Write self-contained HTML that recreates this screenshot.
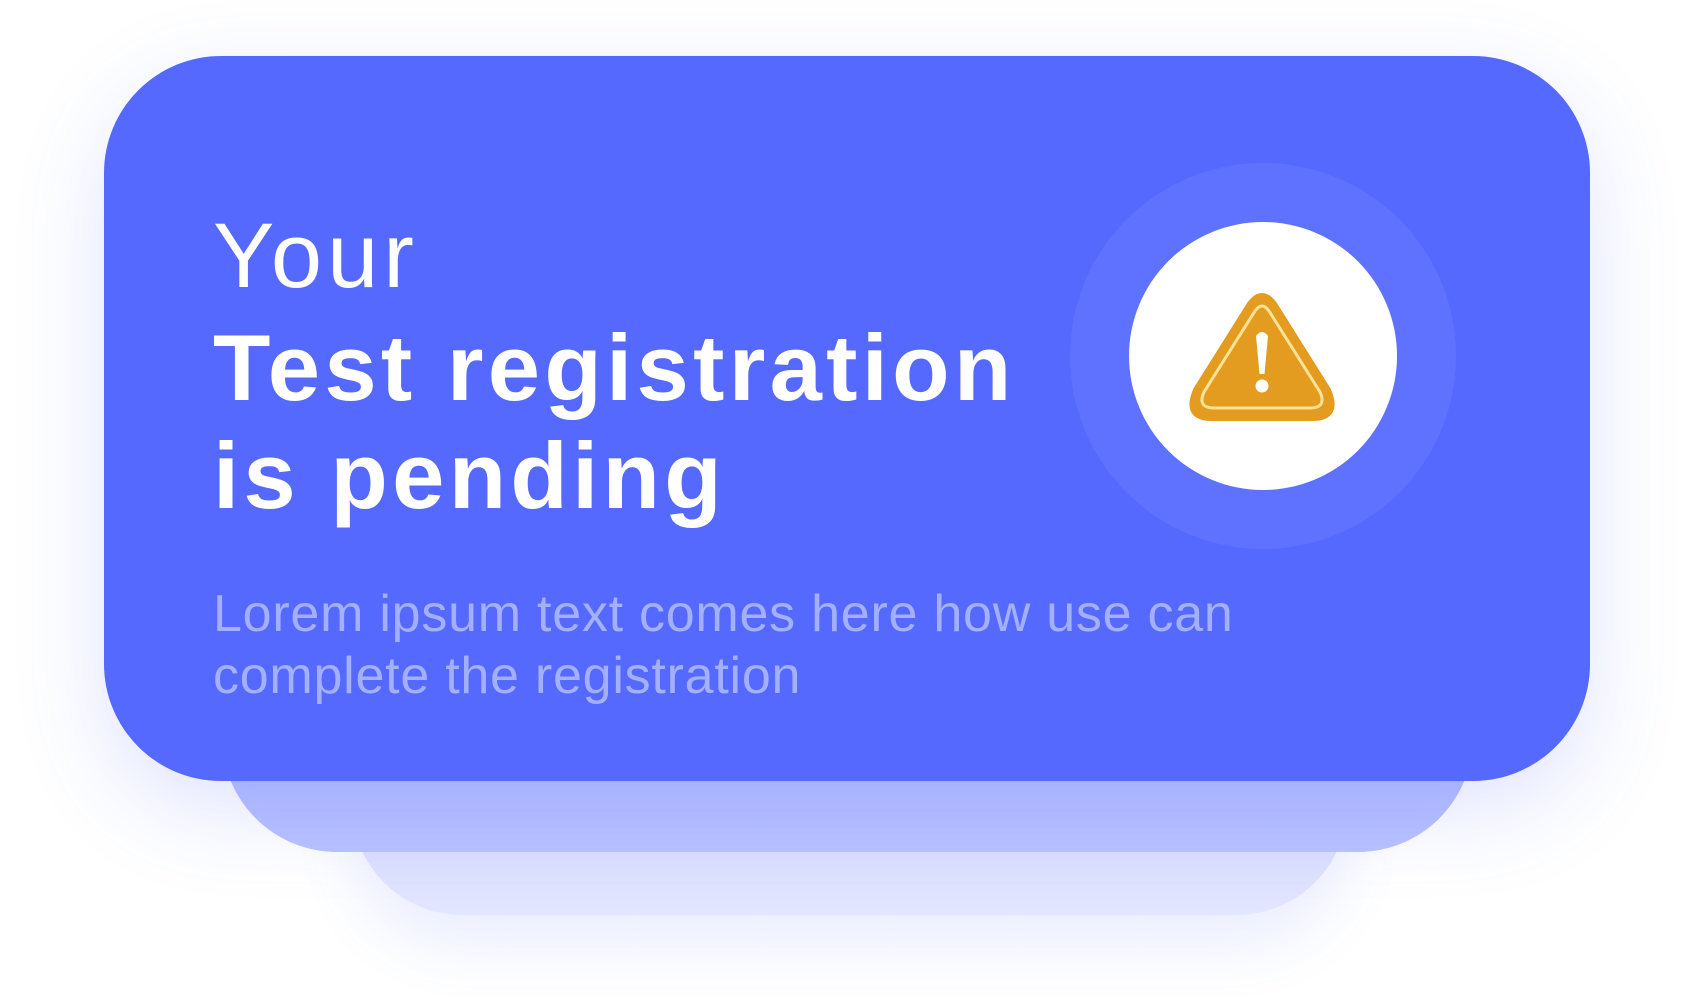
<!DOCTYPE html>
<html><head><style>
html,body{margin:0;padding:0;width:1696px;height:1008px;background:#fff;overflow:hidden;position:relative;font-family:"Liberation Sans",sans-serif}
.l3{position:absolute;left:352px;top:700px;width:995px;height:215px;border-radius:0 0 110px 110px;background:linear-gradient(#c8cfff,#e2e6ff);box-shadow:0 30px 60px rgba(85,105,255,.12)}
.l2{position:absolute;left:222px;top:650px;width:1251px;height:202px;border-radius:0 0 115px 115px;background:linear-gradient(#aab5ff,#bac3ff)}
.card{position:absolute;left:104px;top:56px;width:1486px;height:725px;border-radius:117px;background:#5569ff;box-shadow:0 30px 90px rgba(85,105,255,.18)}
.t{position:absolute;left:213px;color:#fff;white-space:nowrap}
.circ{position:absolute;border-radius:50%}
</style></head><body>
<div class="l3"></div><div class="l2"></div>
<div class="card"></div>
<div class="t" style="top:206px;font-size:92px;line-height:100px;letter-spacing:5px">Your</div>
<div class="t" style="top:318px;font-size:94px;line-height:100px;font-weight:bold;letter-spacing:4.3px">Test registration</div>
<div class="t" style="top:426px;font-size:94px;line-height:100px;font-weight:bold;letter-spacing:4.3px">is pending</div>
<div class="t" style="top:583px;font-size:52px;line-height:62px;color:#a3b0ff;font-weight:300;letter-spacing:0.75px">Lorem ipsum text comes here how use can<br>complete the registration</div>
<div class="circ" style="left:1070px;top:163px;width:386px;height:386px;background:#5e72ff"></div>
<div class="circ" style="left:1129px;top:222px;width:268px;height:268px;background:#fff"></div>
<svg style="position:absolute;left:0;top:0" width="1696" height="1008">
<path d="M1250 304 Q1262 288 1274 304 L1328 390 Q1340 418 1312 418 L1212 418 Q1184 418 1196 390 Z" fill="#e39b20" stroke="#e39b20" stroke-width="6" stroke-linejoin="round"/>
<path d="M1255 311 Q1262 301 1269 311 L1320 392 Q1327 408 1310 408 L1214 408 Q1197 408 1204 392 Z" fill="none" stroke="#ffe394" stroke-width="3"/>
<path d="M1256 336 Q1262 328 1268 336 L1264.5 374 L1259.5 374 Z" fill="#fff"/>
<circle cx="1262" cy="386" r="6.5" fill="#fff"/>
</svg>
</body></html>
